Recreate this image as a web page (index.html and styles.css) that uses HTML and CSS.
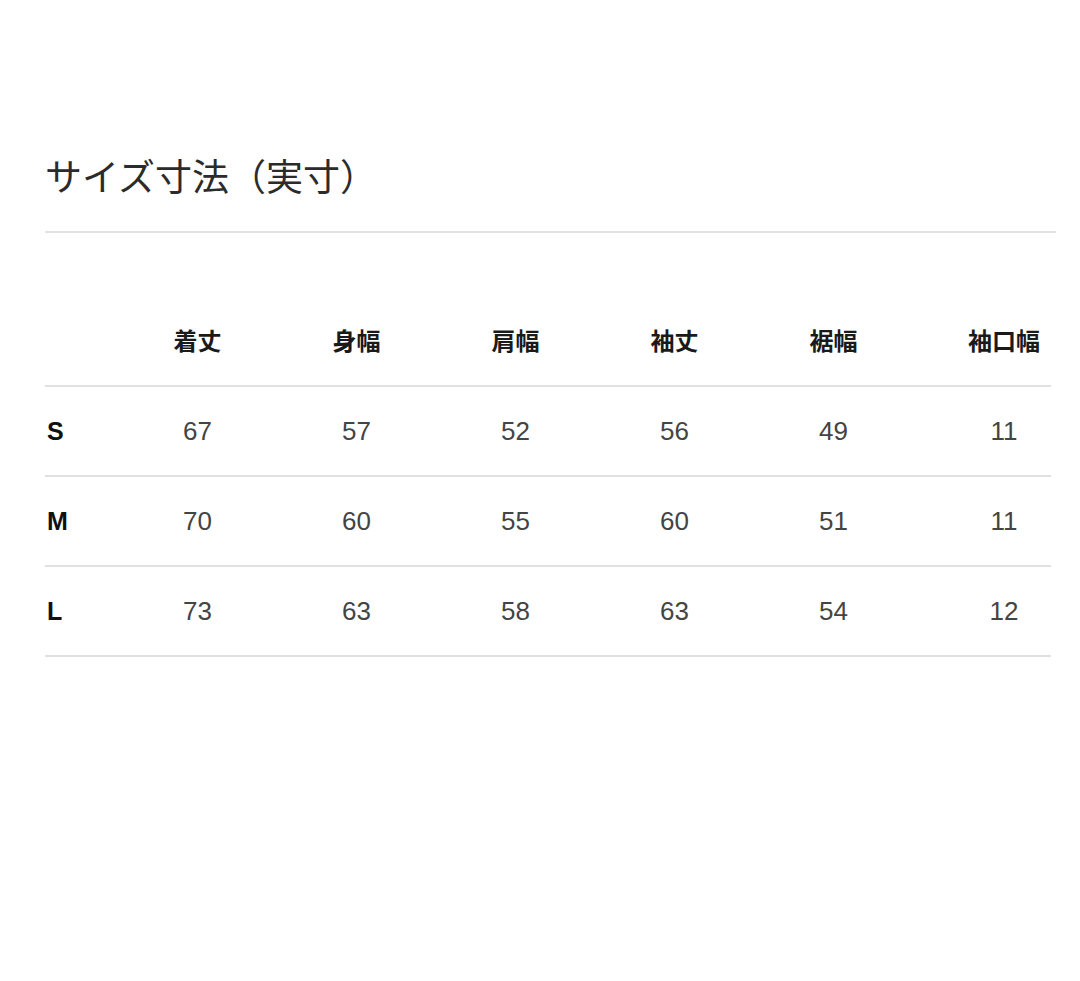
FILE: index.html
```html
<!DOCTYPE html>
<html lang="ja">
<head>
<meta charset="utf-8">
<title>サイズ寸法（実寸）</title>
<link rel="stylesheet" href="styles.css">
</head>
<body>
<main class="page">
  <h1 class="title">サイズ寸法（実寸）</h1>
  <div class="title-rule"></div>
  <div class="size-table">
    <div class="row head">
      <div class="cell label"></div>
      <div class="cell">着丈</div>
      <div class="cell">身幅</div>
      <div class="cell">肩幅</div>
      <div class="cell">袖丈</div>
      <div class="cell">裾幅</div>
      <div class="cell last">袖口幅</div>
    </div>
    <div class="row">
      <div class="cell label">S</div>
      <div class="cell">67</div>
      <div class="cell">57</div>
      <div class="cell">52</div>
      <div class="cell">56</div>
      <div class="cell">49</div>
      <div class="cell last">11</div>
    </div>
    <div class="row">
      <div class="cell label">M</div>
      <div class="cell">70</div>
      <div class="cell">60</div>
      <div class="cell">55</div>
      <div class="cell">60</div>
      <div class="cell">51</div>
      <div class="cell last">11</div>
    </div>
    <div class="row">
      <div class="cell label">L</div>
      <div class="cell">73</div>
      <div class="cell">63</div>
      <div class="cell">58</div>
      <div class="cell">63</div>
      <div class="cell">54</div>
      <div class="cell last">12</div>
    </div>
  </div>
</main>
</body>
</html>
```

FILE: styles.css
```css
html, body {
  margin: 0;
  padding: 0;
  background: #ffffff;
}

body {
  font-family: "Liberation Sans", Arial, "Noto Sans CJK JP", sans-serif;
  color: #333;
}

.page {
  padding: 150px 24px 0 45px;
}

.title {
  margin: 0;
  font-family: "Noto Sans CJK JP", sans-serif;
  font-weight: 400;
  font-size: 37px;
  line-height: 50px;
  color: #2b2b2b;
  letter-spacing: 0;
}

.title-rule {
  margin-top: 31px;
  height: 2px;
  background: #e2e2e2;
}

.size-table {
  margin-top: 64px;
  width: 1006px;
}

.row {
  display: grid;
  grid-template-columns: 73px repeat(5, 159px) 1fr;
  height: 90px;
  align-items: center;
  border-bottom: 2px solid #e0e0e0;
  box-sizing: border-box;
}

.cell {
  text-align: center;
  font-size: 26px;
  color: #444;
}

.cell.last {
  padding-left: 44px;
}

.cell.label {
  text-align: left;
  font-weight: 700;
  font-size: 25px;
  color: #111;
  padding-left: 2px;
}

.head .cell {
  font-family: "Noto Sans CJK JP", sans-serif;
  font-weight: 700;
  font-size: 24px;
  color: #1a1a1a;
  padding-bottom: 3px;
}

.head .cell.last {
  padding-left: 44px;
}
```
